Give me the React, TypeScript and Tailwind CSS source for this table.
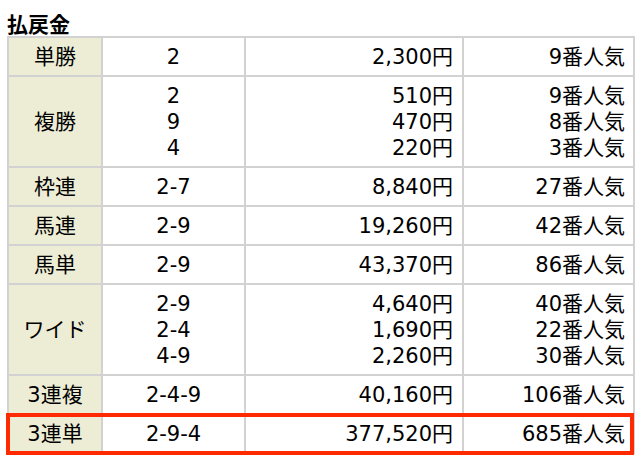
interface PayoutRow {
  kind: string;
  numbers: string[];
  payouts: string[];
  ranks: string[];
}

const rows: PayoutRow[] = [
  { kind: '単勝', numbers: ['2'], payouts: ['2,300円'], ranks: ['9番人気'] },
  {
    kind: '複勝',
    numbers: ['2', '9', '4'],
    payouts: ['510円', '470円', '220円'],
    ranks: ['9番人気', '8番人気', '3番人気'],
  },
  { kind: '枠連', numbers: ['2-7'], payouts: ['8,840円'], ranks: ['27番人気'] },
  { kind: '馬連', numbers: ['2-9'], payouts: ['19,260円'], ranks: ['42番人気'] },
  { kind: '馬単', numbers: ['2-9'], payouts: ['43,370円'], ranks: ['86番人気'] },
  {
    kind: 'ワイド',
    numbers: ['2-9', '2-4', '4-9'],
    payouts: ['4,640円', '1,690円', '2,260円'],
    ranks: ['40番人気', '22番人気', '30番人気'],
  },
  { kind: '3連複', numbers: ['2-4-9'], payouts: ['40,160円'], ranks: ['106番人気'] },
  { kind: '3連単', numbers: ['2-9-4'], payouts: ['377,520円'], ranks: ['685番人気'] },
];

function Lines({ items }: { items: string[] }) {
  return (
    <>
      {items.map((item, i) => (
        <div key={i}>{item}</div>
      ))}
    </>
  );
}

export default function App() {
  return (
    <div
      className="min-h-[459px] bg-white px-[7px] pt-[14px] text-black"
      style={{ fontFamily: '"DejaVu Sans", "Noto Sans CJK JP", sans-serif' }}
    >
      <h2 className="text-[21px] font-bold leading-[22px]">払戻金</h2>
      <div className="relative w-[626px]">
        <table className="w-full table-fixed border-collapse text-[21px] leading-[26px]">
          <colgroup>
            <col className="w-[94px]" />
            <col className="w-[143px]" />
            <col className="w-[218px]" />
            <col className="w-[171px]" />
          </colgroup>
          <tbody>
            {rows.map((row) => (
              <tr key={row.kind}>
                <td className="border-2 border-[#d2d2d2] bg-[#ededd6] pb-[5px] pt-[6px] text-center align-middle">
                  {row.kind}
                </td>
                <td className="border-2 border-[#d2d2d2] pb-[5px] pt-[6px] text-center align-middle">
                  <Lines items={row.numbers} />
                </td>
                <td className="border-2 border-[#d2d2d2] pb-[5px] pr-[9px] pt-[6px] text-right align-middle">
                  <Lines items={row.payouts} />
                </td>
                <td className="border-2 border-[#d2d2d2] pb-[5px] pr-[8px] pt-[6px] text-right align-middle">
                  <Lines items={row.ranks} />
                </td>
              </tr>
            ))}
          </tbody>
        </table>
        <div className="pointer-events-none absolute -bottom-px -left-px -right-px h-[42px] border-4 border-[#ff2a00]" />
      </div>
    </div>
  );
}
